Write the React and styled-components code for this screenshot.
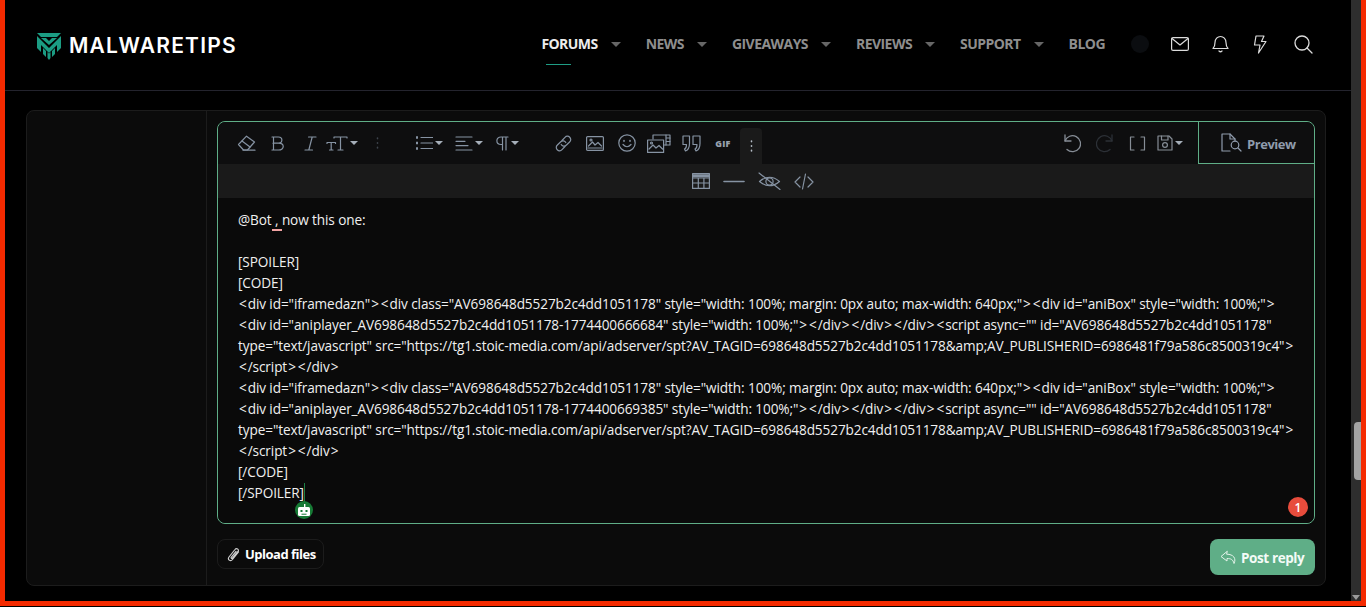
import React from "react";
import styled, { createGlobalStyle } from "styled-components";

const Global = createGlobalStyle`
  html, body { margin: 0; padding: 0; background: #000; height: 100%; overflow: hidden; }
  * { box-sizing: border-box; }
`;
const Frame = styled.div`
  height: 606px; display: flex; background: #000;
  border-left: 5px solid #f42a00; border-right: 5px solid #f42a00; border-bottom: 5px solid #f42a00;
  font-family: "Open Sans", "Noto Sans", sans-serif;
`;
const Page = styled.div`flex: 1; min-width: 0; display: flex; flex-direction: column;`;
const ScrollTrack = styled.div`
  width: 10px; background: #2e2e2e; display: flex; flex-direction: column; align-items: flex-end; padding-top: 422px;
`;
const ScrollThumb = styled.div`width: 7px; height: 58px; background: #a3a3a3; border-radius: 4px 0 0 4px;`;
const ScrollArrow = styled.div`
  margin-top: auto; margin-bottom: 1px; margin-right: 1px; width: 0; height: 0;
  border-left: 4px solid transparent; border-right: 4px solid transparent; border-top: 5px solid #9a9a9a;
`;
const Header = styled.header`
  height: 91px; flex: none; border-bottom: 1px solid #23232d; display: flex; align-items: flex-start;
  padding: 31px 38px 0 31px;
`;
const Logo = styled.div`display: flex; align-items: center; gap: 7px; height: 28px; margin-top: 1px;`;
const LogoText = styled.span`
  font-family: Inter, sans-serif; font-weight: 600; font-size: 21px; letter-spacing: 1.2px; color: #fff; line-height: 28px; margin-top: -1px;
`;
const Nav = styled.nav`margin-left: auto; display: flex; align-items: center; height: 26px;`;
const NavItem = styled.div`
  position: relative; display: flex; align-items: center; gap: 13px; margin-right: 25px;
  font-size: 14px; font-weight: 700; letter-spacing: -0.55px; line-height: 26px;
  color: ${p => (p.$active ? "#ececec" : "#8e8e8e")};
`;
const Underline = styled.span`position: absolute; left: 5px; top: 33px; width: 25px; height: 1px; background: #1f9d85;`;
const Caret = styled.span`
  width: 0; height: 0; border-left: 5px solid transparent; border-right: 5px solid transparent; border-top: 5px solid #666;
`;
const Dot = styled.span`width: 18px; height: 18px; border-radius: 50%; background: #0b0d10; margin: 0 22px 0 1px;`;
const HeadIcon = styled.span`display: flex; margin-right: ${p => p.$mr}px; color: #dcdcdc;`;
const Main = styled.main`flex: 1; padding: 19px 25px 0 21px;`;
const Card = styled.section`
  height: 476px; background: #0b0b0b; border: 1px solid #1c1c1c; border-radius: 8px; display: flex;
`;
const Side = styled.aside`width: 180px; flex: none; border-right: 1px solid #1c1c1c;`;
const Body = styled.div`flex: 1; min-width: 0; padding: 10px 10px 0 10px; display: flex; flex-direction: column;`;
const Editor = styled.div`
  position: relative; height: 403px; border: 1px solid #5fae87; border-radius: 8px; display: flex; flex-direction: column;
`;
const Toolbar = styled.div`height: 42px; flex: none; display: flex; background: #0e0e0f; padding-left: 12px; border-radius: 8px 8px 0 0;`;
const ToolGroup = styled.div`display: flex; align-items: flex-start; margin-left: ${p => p.$ml || 0}px;`;
const ToolBtn = styled.div`
  width: ${p => p.$w || 32}px; height: 42px; flex: none; display: flex; align-items: center; justify-content: center; gap: 2px;
  padding-right: ${p => p.$pr || 0}px;
  color: ${p => p.$c || "#8693a3"};
`;
const GifBtn = styled(ToolBtn)`font-size: 9px; font-weight: 800; letter-spacing: 0.3px; color: #98a2ae;`;
const MoreBtn = styled.div`
  width: 22px; height: 36px; margin: 6px 0 0 1px; background: #1a1a1a; border-radius: 4px 4px 0 0; display: flex; align-items: center; justify-content: center; color: #aab2bd;
`;
const SmallCaret = styled.span`
  width: 0; height: 0; border-left: 4px solid transparent; border-right: 4px solid transparent; border-top: 4px solid #a5aeb9;
`;
const ToolRight = styled.div`margin-left: auto; display: flex;`;
const PreviewTab = styled.div`
  width: 116px; height: 42px; margin-left: 11px; border-left: 1px solid #5fae87; border-bottom: 1px solid #5fae87;
  display: flex; align-items: center; gap: 5px; padding-left: 22px; color: #8f9bac;
  font-size: 13px; font-weight: 700; letter-spacing: -0.45px;
`;
const PreviewLabel = styled.span`margin-top: 2px;`;
const SubBar = styled.div`height: 34px; flex: none; background: #1a1a1a; display: flex; align-items: center; padding-left: 474px; gap: 13px; color: #8693a3;`;
const SubIcon = styled.span`display: flex; color: #8693a3;`;
const Content = styled.div`
  flex: 1; background: #0a0a0a; padding: 11px 20px 0; font-size: 13.6px; line-height: 21px; color: #f0f0f0; border-radius: 0 0 8px 8px;
  letter-spacing: -0.1px;
`;
const Line = styled.div`white-space: nowrap; min-height: 21px;`;
const Bracket = styled.span`margin: 0 1px;`;
const Misspelled = styled.span`border-bottom: 2px solid #f2a3a3;`;
const TextCaret = styled.span`display: inline-block; width: 1px; height: 20px; background: #1a7f45; vertical-align: -5px;`;
const BotBadge = styled.div`
  position: absolute; left: 77px; top: 379px; width: 18px; height: 18px; border-radius: 50%; background: #177a35; display: flex; align-items: center; justify-content: center;
`;
const CountBadge = styled.div`
  position: absolute; right: 6px; top: 375px; width: 20px; height: 20px; border-radius: 50%; background: #e74c3c; color: #fff;
  font-size: 12px; font-weight: 600; display: flex; align-items: center; justify-content: center;
`;
const Actions = styled.div`display: flex; justify-content: space-between; align-items: flex-start; margin-top: 15px;`;
const Upload = styled.button`
  height: 30px; width: 107px; border: 1px solid #1c1c1c; border-radius: 8px; background: transparent; color: #fff; padding: 0 0 0 9px; display: flex; align-items: center; gap: 5px;
  font: 700 13px "Open Sans", sans-serif; letter-spacing: -0.5px;
`;
const Post = styled.button`
  height: 36px; width: 105px; border: 0; border-radius: 8px; background: #5fae87; color: #f4fbf7; padding: 1px 0 0 10px; display: flex; align-items: center; gap: 4px;
  font: 700 13.5px "Open Sans", sans-serif; letter-spacing: -0.4px;
`;

const S = ({ w, h, children, sw = 1.2, c = "currentColor" }) => (
  <svg width={w} height={h} viewBox={`0 0 ${w} ${h}`} fill="none" stroke={c} strokeWidth={sw} strokeLinecap="round" strokeLinejoin="round">{children}</svg>
);

const LogoMark = () => (
  <svg width="26" height="28" viewBox="0 0 26 28" fill="#1b9c83">
    <path d="M1 1 H25 L21 5 H5 Z" />
    <path d="M5 6 H10 L13 9 L16 6 H21 L13 13 Z" />
    <path d="M1 4 L10 13 L13 16 L16 13 L25 4 V16 L21 20 V13 L13 21 L5 13 V20 L1 16 Z" />
    <path d="M7 16 L10 19 V25 L7 22 Z M19 16 L16 19 V25 L19 22 Z" />
    <path d="M11.5 20 L13 21.5 L14.5 20 V26 L13 28 L11.5 26 Z" />
  </svg>
);

const Mail = () => <S w={18} h={14}><rect x="0.6" y="0.6" width="16.8" height="12.8" rx="1.5" /><path d="M1 1.5 L9 8 L17 1.5" /></S>;
const Bell = () => <S w={17} h={18}><path d="M1 13.5 C3 11.5 3 10 3 7.5 C3 4 5.5 1.5 8.5 1.5 C11.5 1.5 14 4 14 7.5 C14 10 14 11.5 16 13.5 Z" /><path d="M7 16 Q8.5 17.5 10 16" /></S>;
const Bolt = () => <S w={14} h={19}><path d="M3 1 H11 L8.5 6.5 H13 L5.5 18 L7 10 H1.5 Z" /></S>;
const Search = () => <S w={19} h={19} sw={1.3}><circle cx="8" cy="8" r="7" /><path d="M13 13 L18 18" /></S>;

const Eraser = () => <S w={19} h={16}><path d="M1.5 9.5 L9.5 1.2 L17.5 7 L10.5 15 H6.5 Z" /><path d="M5 6 L13 12" /><path d="M6 15.2 H18" /></S>;
const Bold = () => <S w={14} h={15}><path d="M1 1 H7.5 C12 1 12 7.2 7.5 7.2 H2 M7.5 7.2 C13.8 7.2 13.8 14 7.5 14 H1 M2.5 1 V14" /></S>;
const Italic = () => <S w={13} h={15}><path d="M4.5 1 H12 M1 14 H8.5 M8.2 1 L4.8 14" /></S>;
const TextSize = () => <S w={22} h={15}><path d="M8 2 V1 H21 V2 M14.5 1 V14 M12 14 H17" /><path d="M1 7.5 V6.5 H9.5 V7.5 M5.2 6.5 V14 M3.5 14 H7" /></S>;
const Dots = ({ c = "#3e444c" }) => <S w={3} h={12} sw={1.6} c={c}><path d="M1.5 1 V1.6 M1.5 5.7 V6.3 M1.5 10.4 V11" /></S>;
const List = () => <S w={18} h={14}><path d="M6 1.5 H17.5 M6 7 H17.5 M6 12.5 H17.5" /><path d="M1 1.5 H3 M1 7 H3 M1 12.5 H3" strokeWidth="2.4" strokeLinecap="butt" /></S>;
const Align = () => <S w={18} h={15}><path d="M1 1 H17 M1 5.3 H10 M1 9.6 H13 M1 14 H17" /></S>;
const Pilcrow = () => <S w={14} h={15}><path d="M13 1 H6 C0.5 1 0.5 8.5 6 8.5 H7.5 M7.5 1 V14 M11 1 V14" /></S>;
const LinkI = () => <S w={19} h={19}><path d="M8 6.5 L11 3.3 C14 0 19 5 15.6 8 L12.5 11 C10.5 13 8 12 7.2 10.5" /><path d="M11 12.5 L8 15.7 C5 19 0 14 3.4 11 L6.5 8 C8.5 6 11 7 11.8 8.5" /></S>;
const ImageI = () => <S w={18} h={15}><rect x="0.6" y="0.6" width="16.8" height="13.8" rx="1" /><path d="M2.5 10 L6.5 6 L9 9 L12 6.5 L15.5 10" /><circle cx="5" cy="4" r="1" /><path d="M2 12 H16" /></S>;
const Smile = () => <S w={18} h={18}><circle cx="9" cy="9" r="8.2" /><path d="M5 10.5 Q9 15 13 10.5" /><path d="M6 6.5 V7.2 M12 6.5 V7.2" strokeWidth="1.6" /></S>;
const Multi = () => <S w={24} h={19}><path d="M6 5 V1 H23 V11 H17" /><path d="M19 1 V11 M19 4 H23 M19 7.5 H23" /><rect x="0.6" y="6" width="16" height="12.4" /><path d="M2 15 L6 11 L9 14 L12 11.5 L15.5 15" /><circle cx="4.5" cy="9" r="1" /></S>;
const Quote = () => <S w={19} h={17}><path d="M1 1 H7.5 V8.5 C7.5 12.5 6 15 3.5 16 L2.5 14 C4 13.5 4.5 12 4.5 9.5 H1 Z" /><path d="M11 1 H18 V8.5 C18 12.5 16.5 15 14 16 L13 14 C14.5 13.5 15 12 15 9.5 H11 Z" /></S>;
const Undo = () => <S w={19} h={19} sw={1.3}><path d="M3 1 V7 H9" /><path d="M3 7 A8 8 0 1 1 5 15.5" /></S>;
const Redo = () => <S w={19} h={19} sw={1.3}><path d="M16 1 V7 H10" /><path d="M16 7 A8 8 0 1 0 14 15.5" /></S>;
const Brackets = () => <S w={17} h={15}><path d="M5 1 H1.5 V14 H5 M12 1 H15.5 V14 H12" /></S>;
const Save = () => <S w={16} h={16}><path d="M1 1 H12 L15 4 V15 H1 Z" /><path d="M4.5 1 V5 H11 V1" /><circle cx="8" cy="10" r="2.4" /></S>;
const Preview = () => <S w={21} h={19}><path d="M9 18 H1 V1 H9 L14 6 V8" /><path d="M9 1 V6 H14" /><circle cx="14" cy="12" r="3.8" /><path d="M17 15 L20 18" /></S>;
const Table = () => <S w={18} h={16}><rect x="0.6" y="0.6" width="16.8" height="14.8" /><path d="M0.6 5 H17.4 M0.6 10 H17.4 M6.3 5 V15 M11.9 5 V15" /><path d="M1 2.8 H17" strokeWidth="3" strokeLinecap="butt" /></S>;
const Rule = () => <S w={22} h={3} sw={1.6}><path d="M1 1.5 H21" /></S>;
const EyeOff = () => <S w={23} h={18}><path d="M1.5 9.5 Q11.5 1 21.5 9.5 Q11.5 18 1.5 9.5 Z" /><circle cx="11.5" cy="9.5" r="3.6" /><path d="M1 1 L22 17.5" /></S>;
const Code = () => <S w={20} h={17}><path d="M6 4 L1 9 L6 14 M14 4 L19 9 L14 14 M11.5 1 L8.5 16" /></S>;
const Clip = () => <S w={13} h={15} c="#cfcfcf"><path d="M11.5 5 L5.5 12.5 C3.5 15 0 12.5 2 10 L8 2.5 C9.5 0.5 12.5 2.5 11 4.5 L5.5 11 C4.7 12 3.6 11 4.4 10 L9 4.5" /></S>;
const Reply = () => <S w={17} h={15} sw={1} c="#e4f3ea"><path d="M7 1.5 L1 6.5 L7 11 V8.5 C11 8.5 13 9.5 14 13.5 C16.5 8.5 13.5 4.2 7 4.2 Z" /></S>;
const Bot = () => (
  <svg width="14" height="14" viewBox="0 0 14 14" fill="#fff">
    <rect x="1" y="4" width="12" height="9" rx="1.5" />
    <rect x="7" y="1" width="1.4" height="3" />
    <rect x="3.5" y="7" width="2" height="2" fill="#177a35" />
    <rect x="8.5" y="7" width="2" height="2" fill="#177a35" />
    <rect x="4.5" y="10.7" width="5" height="1" fill="#177a35" />
  </svg>
);

const navItems = [["FORUMS", true, true], ["NEWS", true], ["GIVEAWAYS", true], ["REVIEWS", true], ["SUPPORT", true], ["BLOG", false]];
const line1 = '<div id="iframedazn"><div class="AV698648d5527b2c4dd1051178" style="width: 100%; margin: 0px auto; max-width: 640px;"><div id="aniBox" style="width: 100%;">';
const line3 = 'type="text/javascript" src="https://tg1.stoic-media.com/api/adserver/spt?AV_TAGID=698648d5527b2c4dd1051178&amp;AV_PUBLISHERID=6986481f79a586c8500319c4">';
const player = id => `<div id="aniplayer_AV698648d5527b2c4dd1051178-${id}" style="width: 100%;"></div></div></div><script async="" id="AV698648d5527b2c4dd1051178"`;

const Markup = ({ text }) => (
  <Line>
    {text.split(/([<>])/).map((part, i) =>
      part === "<" || part === ">" ? <Bracket key={i}>{part}</Bracket> : part
    )}
  </Line>
);

export default function App() {
  return (
    <>
      <Global />
      <Frame>
        <Page>
          <Header>
            <Logo><LogoMark /><LogoText>MALWARETIPS</LogoText></Logo>
            <Nav>
              {navItems.map(([label, caret, active]) => (
                <NavItem key={label} $active={active}>
                  {label}{caret && <Caret />}{active && <Underline />}
                </NavItem>
              ))}
              <Dot />
              <HeadIcon $mr={23}><Mail /></HeadIcon>
              <HeadIcon $mr={24}><Bell /></HeadIcon>
              <HeadIcon $mr={27}><Bolt /></HeadIcon>
              <HeadIcon $mr={0}><Search /></HeadIcon>
            </Nav>
          </Header>
          <Main>
            <Card>
              <Side />
              <Body>
                <Editor>
                  <Toolbar>
                    <ToolGroup>
                      <ToolBtn><Eraser /></ToolBtn>
                      <ToolBtn><Bold /></ToolBtn>
                      <ToolBtn><Italic /></ToolBtn>
                      <ToolBtn $w={32}><TextSize /><SmallCaret /></ToolBtn>
                      <ToolBtn $w={38}><Dots /></ToolBtn>
                    </ToolGroup>
                    <ToolGroup $ml={13}>
                      <ToolBtn $w={40}><List /><SmallCaret /></ToolBtn>
                      <ToolBtn $w={40}><Align /><SmallCaret /></ToolBtn>
                      <ToolBtn $w={36}><Pilcrow /><SmallCaret /></ToolBtn>
                    </ToolGroup>
                    <ToolGroup $ml={22}>
                      <ToolBtn><LinkI /></ToolBtn>
                      <ToolBtn><ImageI /></ToolBtn>
                      <ToolBtn><Smile /></ToolBtn>
                      <ToolBtn><Multi /></ToolBtn>
                      <ToolBtn><Quote /></ToolBtn>
                      <GifBtn>GIF</GifBtn>
                      <MoreBtn><Dots c="#b4bcc6" /></MoreBtn>
                    </ToolGroup>
                    <ToolRight>
                      <ToolBtn $c="#868d96" $pr={3}><Undo /></ToolBtn>
                      <ToolBtn $c="#2c3036"><Redo /></ToolBtn>
                      <ToolBtn $c="#868d96"><Brackets /></ToolBtn>
                      <ToolBtn $w={34} $c="#868d96"><Save /><SmallCaret /></ToolBtn>
                      <PreviewTab><Preview /><PreviewLabel>Preview</PreviewLabel></PreviewTab>
                    </ToolRight>
                  </Toolbar>
                  <SubBar>
                    <SubIcon><Table /></SubIcon>
                    <SubIcon><Rule /></SubIcon>
                    <SubIcon><EyeOff /></SubIcon>
                    <SubIcon><Code /></SubIcon>
                  </SubBar>
                  <Content>
                    <Line>@Bot<Misspelled>&nbsp;,&nbsp;</Misspelled>now this one:</Line>
                    <Line />
                    <Line>[SPOILER]</Line>
                    <Line>[CODE]</Line>
                    <Markup text={line1} />
                    <Markup text={player("1774400666684")} />
                    <Markup text={line3} />
                    <Markup text={"</script></div>"} />
                    <Markup text={line1} />
                    <Markup text={player("1774400669385")} />
                    <Markup text={line3} />
                    <Markup text={"</script></div>"} />
                    <Line>[/CODE]</Line>
                    <Line>[/SPOILER]<TextCaret /></Line>
                  </Content>
                  <BotBadge><Bot /></BotBadge>
                  <CountBadge>1</CountBadge>
                </Editor>
                <Actions>
                  <Upload><Clip />Upload files</Upload>
                  <Post><Reply />Post reply</Post>
                </Actions>
              </Body>
            </Card>
          </Main>
        </Page>
        <ScrollTrack>
          <ScrollThumb />
          <ScrollArrow />
        </ScrollTrack>
      </Frame>
    </>
  );
}
